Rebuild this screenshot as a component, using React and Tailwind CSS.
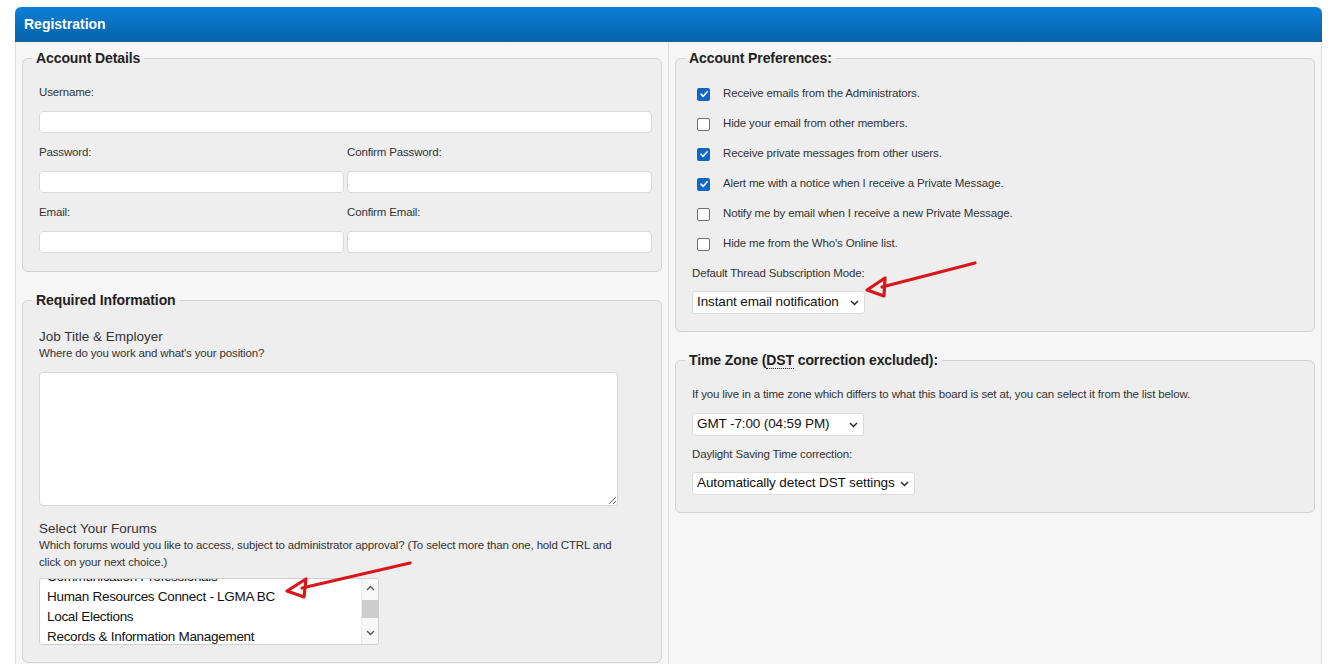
import React from "react";

const Check = ({ on }) =>
  on ? (
    <span className="flex h-[13px] w-[13px] items-center justify-center rounded-[2px] bg-[#0f67c5]">
      <svg width="10" height="10" viewBox="0 0 10 10">
        <path d="M2 5.2 L4.2 7.3 L8.2 2.8" fill="none" stroke="#fff" strokeWidth="1.6" strokeLinecap="round" strokeLinejoin="round" />
      </svg>
    </span>
  ) : (
    <span className="block h-[13px] w-[13px] rounded-[2px] border border-[#6f6f6f] bg-white" />
  );

const Chevron = () => (
  <svg width="9" height="6" viewBox="0 0 9 6" className="shrink-0">
    <path d="M1 1 L4.5 4.5 L8 1" fill="none" stroke="#222" strokeWidth="1.4" />
  </svg>
);

const Select = ({ w, children }) => (
  <div className={`flex h-[23px] items-center justify-between rounded-[3px] border border-[#dcdcdc] bg-white pl-[4px] pr-[5px] text-[13.5px] tracking-[-0.12px] text-[#111] ${w}`}>
    <span className="whitespace-nowrap">{children}</span>
    <Chevron />
  </div>
);

const Input = ({ className = "" }) => (
  <input type="text" className={`block h-[22px] rounded-[4px] border border-[#dadada] bg-white outline-none ${className}`} />
);

const Legend = ({ children }) => (
  <legend className="-ml-[7px] px-[4px] text-[14px] font-bold leading-[17px] tracking-[-0.1px] text-[#222]">{children}</legend>
);

const prefs = [
  [true, "Receive emails from the Administrators."],
  [false, "Hide your email from other members."],
  [true, "Receive private messages from other users."],
  [true, "Alert me with a notice when I receive a Private Message."],
  [false, "Notify me by email when I receive a new Private Message."],
  [false, "Hide me from the Who's Online list."],
];

export default function App() {
  return (
    <div className="relative h-[664px] w-[1340px] overflow-hidden bg-white text-[#333]" style={{ fontFamily: '"Liberation Sans", Arial, sans-serif' }}>
      <div className="ml-[15px] mt-[7px] w-[1307px]">
        <div className="flex h-[35px] items-center rounded-t-[6px] bg-gradient-to-b from-[#0b80da] to-[#0561a5] pl-[9px] text-[14px] font-bold text-white">
          Registration
        </div>
        <div className="flex h-[630px] border-x border-[#dedede] bg-[#f6f6f6]">
          {/* Left column */}
          <div className="flex w-[653px] flex-col border-r border-[#dcdcdc] px-[6px] pt-[8px]">
            <fieldset className="rounded-[6px] border border-[#d2d2d2] bg-[#eeeeee] pb-[18px] pl-[16px] pr-[9px] pt-[17px] text-[11.5px] tracking-[-0.15px]">
              <Legend>Account Details</Legend>
              <div className="leading-[16px]">Username:</div>
              <Input className="mt-[11px] w-[613px]" />
              <div className="mt-[11px] flex gap-[3px]">
                <div className="w-[305px]">
                  <div className="leading-[16px]">Password:</div>
                  <Input className="mt-[11px] w-[305px]" />
                </div>
                <div className="w-[305px]">
                  <div className="leading-[16px]">Confirm Password:</div>
                  <Input className="mt-[11px] w-[305px]" />
                </div>
              </div>
              <div className="mt-[11px] flex gap-[3px]">
                <div className="w-[305px]">
                  <div className="leading-[16px]">Email:</div>
                  <Input className="mt-[11px] w-[305px]" />
                </div>
                <div className="w-[305px]">
                  <div className="leading-[16px]">Confirm Email:</div>
                  <Input className="mt-[11px] w-[305px]" />
                </div>
              </div>
            </fieldset>

            <fieldset className="mt-[20px] rounded-[6px] border border-[#d2d2d2] bg-[#eeeeee] pb-[17px] pl-[16px] pr-[9px] pt-[20px]">
              <Legend>Required Information</Legend>
              <div className="text-[13.5px] leading-[16px] text-[#333]">Job Title &amp; Employer</div>
              <div className="text-[11.5px] leading-[16px] tracking-[-0.15px]">Where do you work and what's your position?</div>
              <textarea className="mt-[11px] block h-[134px] w-[579px] resize rounded-[4px] border border-[#d8d8d8] bg-white outline-none" />
              <div className="mt-[15px] text-[13.5px] leading-[16px]">Select Your Forums</div>
              <div className="w-[586px] text-[11.5px] leading-[17px] tracking-[-0.15px]">
                Which forums would you like to access, subject to administrator approval? (To select more than one, hold CTRL and click on your next choice.)
              </div>
              <div className="mt-[7px] flex h-[67px] w-[340px] overflow-hidden rounded-[3px] border border-[#d0d0d0] bg-white">
                <div className="flex-1 overflow-hidden pl-[7px] text-[13.5px] leading-[20px] tracking-[-0.3px] text-[#111]">
                  <div className="-mt-[12px]">
                    <div>Communication Professionals</div>
                    <div>Human Resources Connect - LGMA BC</div>
                    <div>Local Elections</div>
                    <div>Records &amp; Information Management</div>
                  </div>
                </div>
                <div className="flex w-[17px] flex-col items-center border-l border-[#ececec] bg-[#f8f8f8]">
                  <svg width="9" height="6" viewBox="0 0 9 6" className="mt-[6px]">
                    <path d="M1 5 L4.5 1.5 L8 5" fill="none" stroke="#555" strokeWidth="1.4" />
                  </svg>
                  <div className="mt-[9px] h-[18px] w-[16px] bg-[#cdcdcd]" />
                  <svg width="9" height="6" viewBox="0 0 9 6" className="mt-[12px]">
                    <path d="M1 1 L4.5 4.5 L8 1" fill="none" stroke="#555" strokeWidth="1.4" />
                  </svg>
                </div>
              </div>
            </fieldset>
          </div>

          {/* Right column */}
          <div className="flex flex-1 flex-col px-[6px] pt-[8px]">
            <fieldset className="rounded-[6px] border border-[#d2d2d2] bg-[#eeeeee] pb-[17px] pl-[16px] pr-[9px] pt-[12px] text-[11.5px] tracking-[-0.15px]">
              <Legend>Account Preferences:</Legend>
              {prefs.map(([on, label]) => (
                <div key={label} className="flex h-[30px] items-center">
                  <span className="ml-[5px]">
                    <Check on={on} />
                  </span>
                  <span className="ml-[13px]">{label}</span>
                </div>
              ))}
              <div className="mt-[6px] leading-[16px]">Default Thread Subscription Mode:</div>
              <div className="mt-[10px]">
                <Select w="w-[173px]">Instant email notification</Select>
              </div>
            </fieldset>

            <fieldset className="mt-[20px] rounded-[6px] border border-[#d2d2d2] bg-[#eeeeee] pb-[17px] pl-[16px] pr-[9px] pt-[17px] text-[11.5px] tracking-[-0.15px]">
              <Legend>
                Time Zone (<abbr className="border-b border-dotted border-[#222] no-underline">DST</abbr> correction excluded):
              </Legend>
              <div className="leading-[16px]">
                If you live in a time zone which differs to what this board is set at, you can select it from the list below.
              </div>
              <div className="mt-[11px]">
                <Select w="w-[172px]">GMT -7:00 (04:59 PM)</Select>
              </div>
              <div className="mt-[10px] leading-[16px]">Daylight Saving Time correction:</div>
              <div className="mt-[10px]">
                <Select w="w-[223px]">Automatically detect DST settings</Select>
              </div>
            </fieldset>
          </div>
        </div>
      </div>

      {/* Red annotation arrows */}
      <svg className="pointer-events-none absolute left-0 top-0" width="1340" height="664">
        <g fill="none" stroke="#d9161b" strokeWidth="3.2" strokeLinecap="round" strokeLinejoin="round">
          <path d="M410 563 L302 588" />
          <path d="M287 591 L306 579 L304 597 Z" />
          <path d="M975 263 L882 287" />
          <path d="M867 290 L885 278 L884 296 Z" />
        </g>
      </svg>
    </div>
  );
}
